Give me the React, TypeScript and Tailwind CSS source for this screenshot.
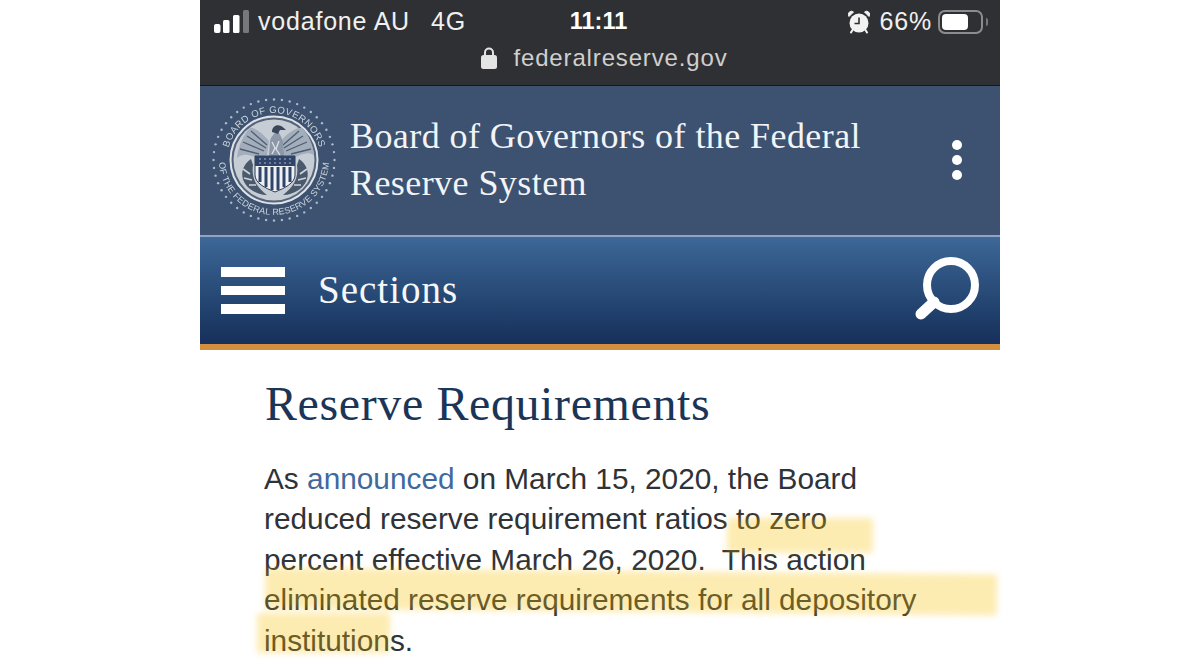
import React from 'react';

const sans = "font-['Liberation_Sans',Arial,sans-serif]";
const serif = "font-['Liberation_Serif','Times_New_Roman',serif]";

const SignalBars = () => (
  <svg width="36" height="24" viewBox="0 0 36 24" className="shrink-0">
    <rect x="0" y="14" width="6.500" height="9" rx="2" fill="#fff" />
    <rect x="9" y="10" width="6.500" height="13" rx="1.500" fill="#fff" />
    <rect x="19" y="5" width="6.500" height="18" rx="1.500" fill="#fff" />
    <rect x="29" y="0" width="6" height="23" rx="1.500" fill="#77787a" />
  </svg>
);

const LockIcon = () => (
  <svg width="18" height="24" viewBox="0 0 18 24" className="shrink-0">
    <path d="M5 10V6.500a4 4 0 0 1 8 0V10" fill="none" stroke="#e4e4e4" strokeWidth="2" />
    <rect x="1" y="9" width="16" height="14" rx="2.500" fill="#e4e4e4" />
  </svg>
);

const AlarmIcon = () => (
  <svg width="22" height="24" viewBox="0 0 22 24" className="shrink-0">
    <path d="M1 6.500 L5.500 2 A3.200 3.200 0 0 0 1 6.500Z M21 6.500 L16.500 2 A3.200 3.200 0 0 1 21 6.500Z" fill="#f2f2f2" stroke="#f2f2f2" />
    <circle cx="11" cy="13" r="9.500" fill="#f2f2f2" />
    <path d="M11 7.500V13.500H6.500" fill="none" stroke="#2f3033" strokeWidth="1.600" />
    <path d="M4.500 20 L3 22.500 M17.500 20 L19 22.500" stroke="#f2f2f2" strokeWidth="2" strokeLinecap="round" />
  </svg>
);

const Battery = () => (
  <div className="flex items-center gap-[3px]">
    <div className="w-[45px] h-[24px] rounded-[7px] border-2 border-[#8b8c8e] p-[2px] pr-[13px]">
      <div className="w-full h-full rounded-[4px] bg-white" />
    </div>
    <div className="w-[2px] h-[8px] rounded-r-full bg-[#77787a]" />
  </div>
);

const ringDots = (count: number, r: number) =>
  Array.from({ length: count }, (_, i) => {
    const a = (i / count) * Math.PI * 2;
    return { x: 65 + Math.cos(a) * r, y: 65 + Math.sin(a) * r };
  });

const Seal = () => (
  <svg width="130" height="130" viewBox="0 0 130 130" className="shrink-0 blur-[0.4px]">
    <defs>
      <path id="sealTop" d="M65 65 m-47 0 a47 47 0 0 1 94 0" />
      <path id="sealBottom" d="M65 65 m-55 0 a55 55 0 0 0 110 0" />
    </defs>
    {ringDots(48, 60.500).map((d, i) => (
      <circle key={i} cx={d.x} cy={d.y} r="1.200" fill="#aeb9c7" />
    ))}
    <text fontFamily="Liberation Sans, Arial, sans-serif" fontSize="9.600" fill="#ccd3db" letterSpacing="0.4">
      <textPath href="#sealTop" startOffset="50%" textAnchor="middle">
        BOARD OF GOVERNORS
      </textPath>
    </text>
    <text fontFamily="Liberation Sans, Arial, sans-serif" fontSize="9" fill="#ccd3db" letterSpacing="0.2">
      <textPath href="#sealBottom" startOffset="50%" textAnchor="middle">
        OF THE FEDERAL RESERVE SYSTEM
      </textPath>
    </text>
    <circle cx="65" cy="65" r="43.500" fill="#55647a" stroke="#dfe3e8" strokeWidth="2" />
    <circle cx="65" cy="65" r="40.500" fill="#c6cdd5" />
    {/* wings */}
    <path d="M60 46 C52 36 44 32 41 33 C34 40 29 52 28 63 C34 58 40 60 46 62 L58 60Z" fill="#a3aebc" />
    <path d="M72 46 C80 36 90 32 93 33 C100 40 104 50 105 60 C98 56 92 60 86 62 L74 60Z" fill="#a3aebc" />
    <path d="M42 36 L58 50 M38 41 L57 53 M34 47 L55 56 M31 54 L50 59 M90 36 L74 50 M94 41 L75 53 M98 47 L77 56 M102 54 L82 59" stroke="#4f5d71" strokeWidth="1.300" />
    {/* body and head */}
    <path d="M60 61 L61 46 C62 42 64 40 66 38 L70 38 C72 41 73 44 74 47 L75 61Z" fill="#8c98a8" />
    <path d="M63 47 L66 53 L63 59 M70 46 L67 54 L71 60" stroke="#dfe3e8" strokeWidth="1.300" fill="none" />
    <path d="M63 37 C63 31 68 29 72 31 C74 32 75 33 77 35 L71 35 L69 39Z" fill="#39475b" />
    {/* branches */}
    <path d="M42 64 C30 72 30 88 44 96 C48 98 52 100 58 100 C48 92 42 84 44 70Z" fill="#4b596d" />
    <path d="M90 64 C102 72 102 88 88 96 C84 98 80 100 74 100 C84 92 90 84 88 70Z" fill="#4b596d" />
    <path d="M34 74 L41 79 M35 83 L43 85 M40 90 L47 90 M98 74 L91 79 M97 83 L89 85 M92 90 L85 90" stroke="#ced4dc" strokeWidth="1.600" />
    {/* shield */}
    <path d="M46 61 H86 V80 C86 88 76 93 66 97 C56 93 46 88 46 80Z" fill="#eef0f3" stroke="#2a3a55" strokeWidth="1" />
    <path d="M46 61 H86 V71 H46Z" fill="#2f4468" />
    <path d="M51 72V87 M57 72V92 M63 72V95 M69 72V95 M75 72V92 M81 72V87" stroke="#2f4468" strokeWidth="3" />
    <path d="M50 64H82 M50 68H82" stroke="#a8b4c6" strokeWidth="1" strokeDasharray="2 3" />
  </svg>
);

const SearchIcon = () => (
  <svg width="66" height="66" viewBox="0 0 66 66" className="shrink-0">
    <circle cx="37" cy="29" r="24" fill="none" stroke="#fff" strokeWidth="8" />
    <path d="M20 46 L7 58" stroke="#fff" strokeWidth="11" strokeLinecap="round" />
  </svg>
);

export default function App() {
  return (
    <div className={`w-[1200px] h-[667px] overflow-hidden bg-white ${sans}`}>
      <div className="w-[800px] mx-auto">
        {/* phone status bar + address */}
        <div className="h-[86px] bg-[#2f3033] border-b border-[#17181a] text-white">
          <div className="flex items-center h-[44px] pl-[14px] pr-[12px] text-[25px] tracking-[0.8px]">
            <div className="flex-1 flex items-center">
              <SignalBars />
              <span className="ml-[8px] text-[#f0f0f0]">vodafone AU</span>
              <span className="ml-[21px] text-[#f0f0f0]">4G</span>
            </div>
            <span className="font-bold text-[23.500px] tracking-[0px] mr-[5px]">11:11</span>
            <div className="flex-1 flex items-center justify-end">
              <AlarmIcon />
              <span className="ml-[10px] mr-[6px] text-[#f0f0f0]">66%</span>
              <Battery />
            </div>
          </div>
          <div className="flex items-center justify-center gap-[15px] h-[28px] pl-[8px] text-[24px] tracking-[0.85px] text-[#cfcfcf]">
            <LockIcon />
            <span>federalreserve.gov</span>
          </div>
        </div>

        {/* agency header */}
        <div className="flex items-center h-[151px] pl-[9px] pr-[38px] pb-[2px] bg-[#3c5270] border-b-2 border-[#8fa3c6]">
          <Seal />
          <div className={`ml-[11px] flex-1 text-[36px] leading-[47px] tracking-[0.43px] text-[#f2f4f7] ${serif}`}>
            Board of Governors of the Federal
            <br />
            Reserve System
          </div>
          <div className="flex flex-col gap-[5px]">
            <div className="w-[10px] h-[10px] rounded-full bg-white" />
            <div className="w-[10px] h-[10px] rounded-full bg-white" />
            <div className="w-[10px] h-[10px] rounded-full bg-white" />
          </div>
        </div>

        {/* sections nav */}
        <div className="flex items-center h-[107px] pl-[21px] pr-[20px] bg-gradient-to-b from-[#3d6898] to-[#16305a]">
          <div className="flex flex-col gap-[9px] w-[64px]">
            <div className="h-[10px] bg-white" />
            <div className="h-[9px] bg-white" />
            <div className="h-[10px] bg-white" />
          </div>
          <span className={`ml-[33px] flex-1 text-[39px] tracking-[1px] text-[#f6f7f9] ${serif}`}>Sections</span>
          <div className="mb-[4px]">
            <SearchIcon />
          </div>
        </div>
        <div className="h-[6px] bg-[#d38f3f]" />

        {/* page content */}
        <div className="pl-[65px] pt-[25px]">
          <h1 className={`text-[48px] leading-[58px] tracking-[0.6px] text-[#1b3556] ${serif}`}>Reserve Requirements</h1>
          <div className="relative w-[736px] -ml-[1px] mt-[26px] text-[29.800px] leading-[40.400px] text-[#2f3338] whitespace-pre">
            <p>
              As <span className="text-[#3f6a9e]">announced</span> on March 15, 2020, the Board
              <br />
              reduced reserve requirement ratios to zero
              <br />
              percent effective March 26, 2020.  This action
              <br />
              eliminated reserve requirements for all depository
              <br />
              institutions.
            </p>
            {/* marker highlights */}
            <div className="absolute left-[463px] top-[59px] w-[146px] h-[35px] rounded-[3px] bg-[#f9c000]/30 blur-[3px]" />
            <div className="absolute left-[1px] top-[112px] w-[732px] h-[41px] rotate-[0.55deg] rounded-[3px] bg-[#f9c000]/30 blur-[3px]" />
            <div className="absolute left-[-7px] top-[154px] w-[133px] h-[40px] rounded-[3px] bg-[#f9c000]/30 blur-[3px]" />
          </div>
        </div>
      </div>
    </div>
  );
}
